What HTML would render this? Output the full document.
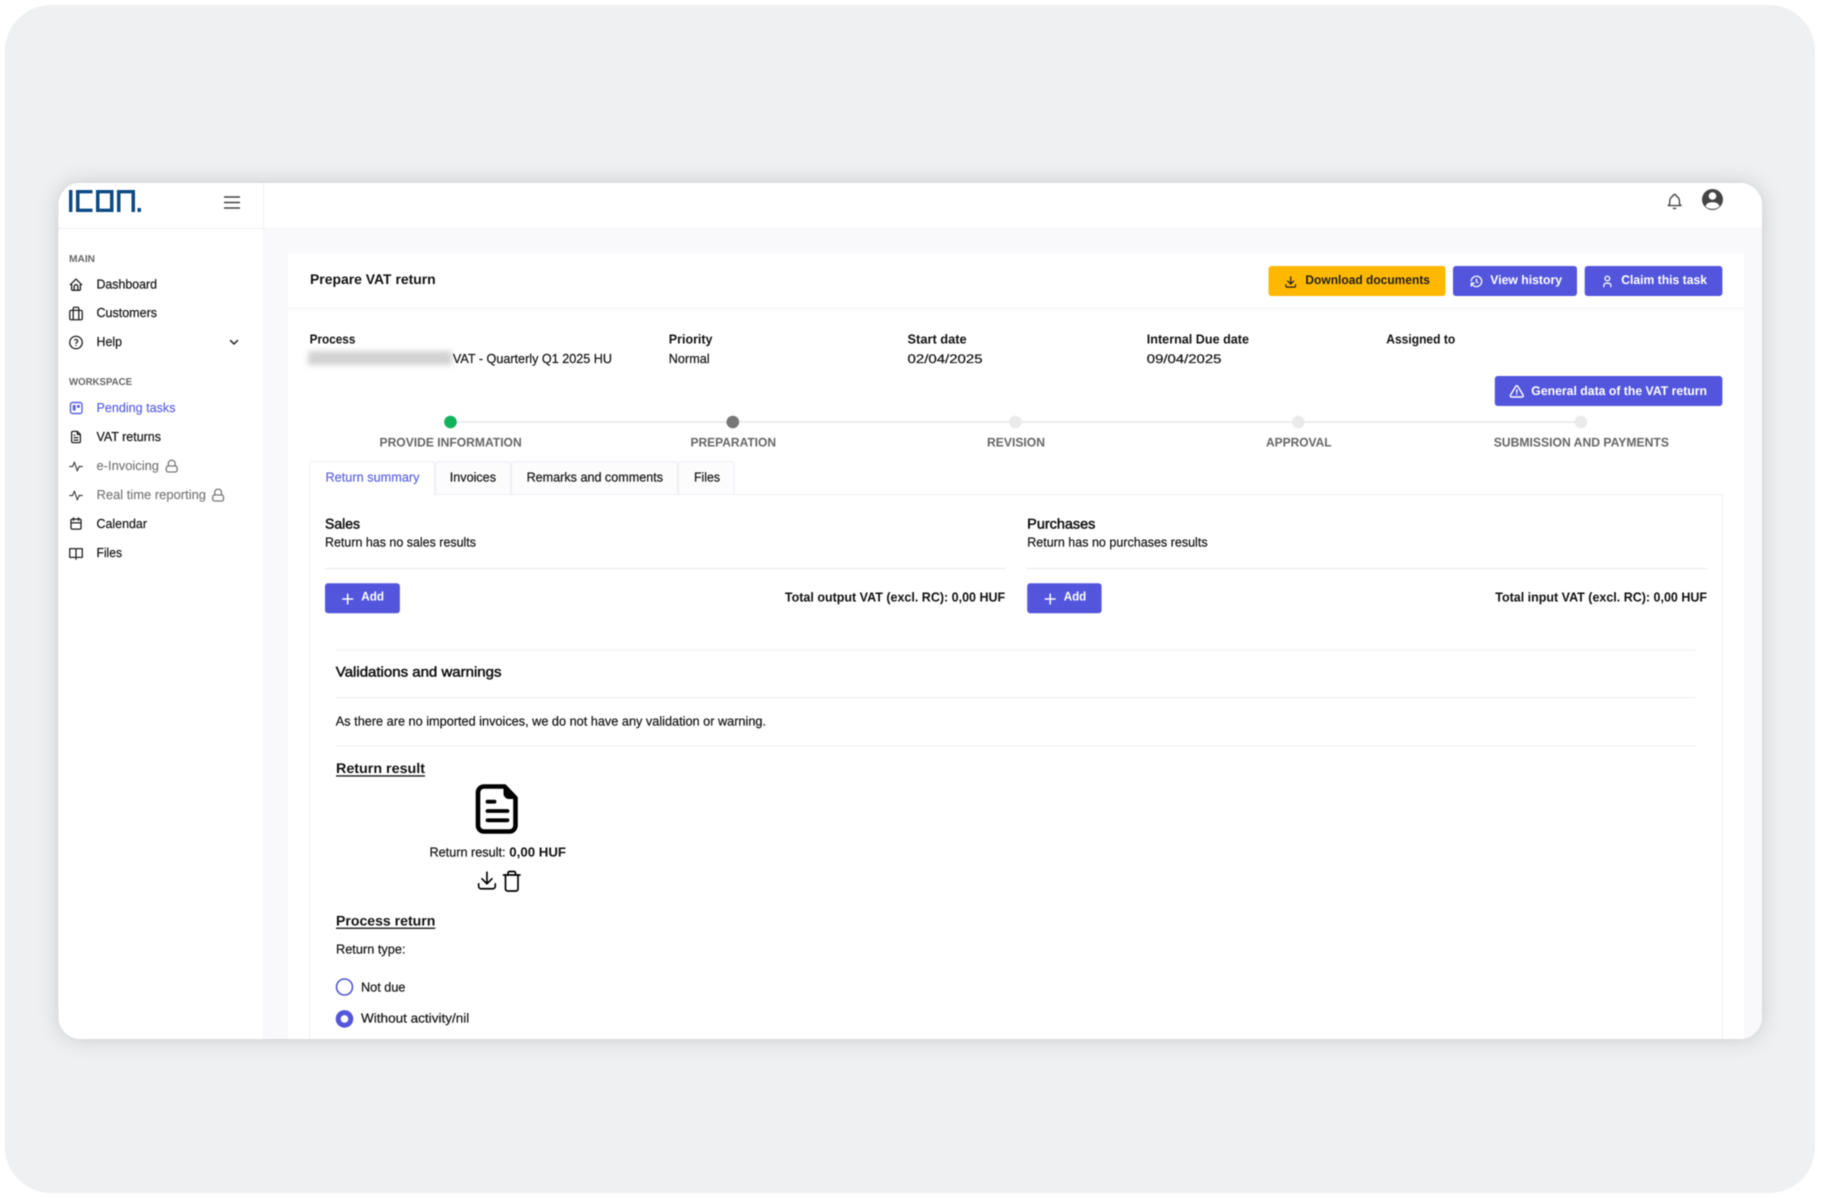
<!DOCTYPE html>
<html lang="en">
<head>
<meta charset="utf-8">
<title>Prepare VAT return</title>
<style>
html,body{margin:0;padding:0;background:#fff;width:1821px;height:1199px;overflow:hidden}
svg{display:block;filter:blur(.4px)}
text{font-family:"Liberation Sans",sans-serif;white-space:pre;text-rendering:geometricPrecision}
.r{font-size:13px;fill:#111;stroke:#111;stroke-width:.18px}
.b{font-size:13px;font-weight:700;fill:#111}
.h{font-size:14px;font-weight:700;fill:#111}
.m{font-size:14px;fill:#111;stroke:#111;stroke-width:.5px}
.s{font-size:10px;font-weight:700;fill:#666}
.n{font-size:13px;fill:#1a1a1a;stroke:#1a1a1a;stroke-width:.25px}
.d{font-size:12.3px;fill:#1a1a1a;stroke:#1a1a1a;stroke-width:.25px}
.g{font-size:13px;fill:#777;stroke:#777;stroke-width:.15px}
.p{font-size:13px;fill:#5b5fe0;stroke:#5b5fe0;stroke-width:.15px}
.st{font-size:12.5px;font-weight:700;fill:#666}
.w{font-size:12.5px;font-weight:700;fill:#fff}
.k{font-size:12.5px;font-weight:700;fill:#222}
.i{fill:none;stroke:#222;stroke-width:2.100;stroke-linecap:round;stroke-linejoin:round}
.a{fill:none;stroke:#444;stroke-width:1.900;stroke-linecap:round;stroke-linejoin:round}
.iw{fill:none;stroke:#fff;stroke-width:2.200;stroke-linecap:round;stroke-linejoin:round}
</style>
</head>
<body>
<svg width="1821" height="1199" viewBox="0 0 1821 1199" xmlns="http://www.w3.org/2000/svg">
<defs>
<filter id="sh" x="-5%" y="-8%" width="110%" height="116%"><feDropShadow dx="0" dy="0" stdDeviation="10" flood-color="#000" flood-opacity=".17"/></filter>
<filter id="bl" x="-10%" y="-60%" width="120%" height="220%"><feGaussianBlur stdDeviation="3"/></filter>
<clipPath id="win"><rect x="58.500" y="183" width="1703.500" height="856" rx="22"/></clipPath>
</defs>

<rect x="5" y="5" width="1810" height="1188" rx="46" fill="#eff0f2"/>
<rect x="58.500" y="183" width="1703.500" height="856" rx="22" fill="#fff" filter="url(#sh)"/>

<g clip-path="url(#win)">
<rect x="58" y="183" width="1704" height="856" fill="#f9f9fb"/>
<rect x="58" y="183" width="1704" height="45" fill="#fff"/>
<rect x="58" y="183" width="205" height="856" fill="#fff"/>
<rect x="263" y="183" width="1" height="45" fill="#f0f0f6"/>
<rect x="263" y="228" width="1" height="811" fill="#f5f5f8"/>
<rect x="58" y="228" width="205" height="1" fill="#eeeef6"/>
<rect x="264" y="228" width="1498" height="1" fill="#f5f5f7"/>

<!-- logo -->
<g fill="#0d4a85">
<title>ICON.</title>
<rect x="69" y="190" width="3.400" height="22"/>
<path d="M76 190h16.500v3.400h-13v15.200h13v3.400h-16.500z"/>
<path d="M96 190h17.500v22h-17.500zM99.500 193.400v15.200h10.500v-15.200z" fill-rule="evenodd"/>
<path d="M117 190h18v22h-3.500v-18.600h-11v18.600h-3.500z"/>
<rect x="137.500" y="208" width="3.500" height="4"/>
</g>
<!-- hamburger -->
<g stroke="#444" stroke-width="1.500"><path d="M224 197h16M224 202.500h16M224 208h16"/></g>

<!-- sidebar -->
<text class="s" x="69" y="262" textLength="26" lengthAdjust="spacingAndGlyphs">MAIN</text>
<text class="n" x="96.500" y="288.700" textLength="60.500" lengthAdjust="spacingAndGlyphs">Dashboard</text>
<text class="n" x="96.500" y="317" textLength="60.500" lengthAdjust="spacingAndGlyphs">Customers</text>
<text class="n" x="96.500" y="346" textLength="25.500" lengthAdjust="spacingAndGlyphs">Help</text>
<text class="s" x="69" y="385" textLength="63" lengthAdjust="spacingAndGlyphs">WORKSPACE</text>
<text class="p" x="96.500" y="412" textLength="79" lengthAdjust="spacingAndGlyphs">Pending tasks</text>
<text class="n" x="96.500" y="441" textLength="64.500" lengthAdjust="spacingAndGlyphs">VAT returns</text>
<text class="g" x="96.500" y="470" textLength="62.500" lengthAdjust="spacingAndGlyphs">e-Invoicing</text>
<text class="g" x="96.500" y="499" textLength="109.500" lengthAdjust="spacingAndGlyphs">Real time reporting</text>
<text class="n" x="96.500" y="528" textLength="50.500" lengthAdjust="spacingAndGlyphs">Calendar</text>
<text class="n" x="96.500" y="557" textLength="25.500" lengthAdjust="spacingAndGlyphs">Files</text>

<g transform="translate(68.500 277.200) scale(.625)"><path class="i" d="M5 12H3l9-9 9 9h-2M5 12v7a2 2 0 0 0 2 2h10a2 2 0 0 0 2-2v-7M9 21v-6a3 3 0 0 1 6 0v6"/></g>
<g transform="translate(68.500 306) scale(.625)"><path class="i" d="M2 9a2 2 0 0 1 2-2h16a2 2 0 0 1 2 2v11a2 2 0 0 1-2 2H4a2 2 0 0 1-2-2zM7.500 22V7M16.500 22V7M7.500 7V4a2 2 0 0 1 2-2h5a2 2 0 0 1 2 2v3"/></g>
<g transform="translate(68.500 335) scale(.625)"><path class="i" d="M12 2a10 10 0 1 0 0 20 10 10 0 0 0 0-20M12 17v.010M12 13.500a1.500 1.500 0 0 1 1-1.500 2.600 2.600 0 1 0-3-4"/></g>
<path d="M230.500 340.500l3.500 3.500 3.500-3.500" fill="none" stroke="#222" stroke-width="1.500" stroke-linecap="round" stroke-linejoin="round"/>

<g fill="none" stroke="#5b5fe0" stroke-width="1.400">
<rect x="70.500" y="402.500" width="11.500" height="11" rx="2"/>
<rect x="72.800" y="405" width="2.800" height="5.500" fill="#5b5fe0" stroke="none"/>
<rect x="77" y="405" width="2.800" height="2.800" fill="#5b5fe0" stroke="none"/>
</g>
<g transform="translate(68.500 429.500) scale(.625)"><path class="i" d="M14 3v4a1 1 0 0 0 1 1h4M17 21H7a2 2 0 0 1-2-2V5a2 2 0 0 1 2-2h7l5 5v11a2 2 0 0 1-2 2zM9 9h1M9 13h6M9 17h6"/></g>
<g transform="translate(68.500 459) scale(.625)"><path class="a" d="M2 12h4.500l3-7 4.500 14 3-7h5"/></g>
<g transform="translate(68.500 488) scale(.625)"><path class="a" d="M2 12h4.500l3-7 4.500 14 3-7h5"/></g>
<g fill="none" stroke="#777" stroke-width="1.300" stroke-linejoin="round">
<rect x="166.300" y="466" width="10.800" height="6" rx="1.800"/><path d="M168.300 466v-2.500a3.400 3.400 0 0 1 6.800 0v2.500"/>
<rect x="212.700" y="495" width="10.800" height="6" rx="1.800"/><path d="M214.700 495v-2.500a3.400 3.400 0 0 1 6.800 0v2.500"/>
</g>
<g transform="translate(68.500 516) scale(.625)"><path class="i" d="M4 7a2 2 0 0 1 2-2h12a2 2 0 0 1 2 2v12a2 2 0 0 1-2 2H6a2 2 0 0 1-2-2zM16 3v4M8 3v4M4 11h16"/></g>
<g transform="translate(68.500 545.500) scale(.625)"><path class="i" d="M2 5h8a2 2 0 0 1 2 2v15M22 5h-8a2 2 0 0 0-2 2M2 5v14h8M22 5v14h-8"/></g>

<!-- top right -->
<g transform="translate(1665 192) scale(.8)"><path fill="none" stroke="#444" stroke-width="1.700" stroke-linecap="round" stroke-linejoin="round" d="M10 5a2 2 0 1 1 4 0 7 7 0 0 1 4 6v3a4 4 0 0 0 2 3H4a4 4 0 0 0 2-3v-3a7 7 0 0 1 4-6M10.500 20.500h3"/></g>
<circle cx="1712.500" cy="199.500" r="10.500" fill="#444"/>
<circle cx="1712.500" cy="196" r="3.800" fill="#fff"/>
<path d="M1705.500 206.200c1-3 3.500-4 7-4s6 1 7 4c-1.600 1.700-4.100 2.700-7 2.700s-5.400-1-7-2.700z" fill="#fff"/>

<!-- card -->
<rect x="288" y="253" width="1456" height="800" rx="3" fill="#fff"/>
<rect x="288" y="308" width="1456" height="1" fill="#f3f3f5"/>
<text class="h" x="310" y="284" textLength="125.700" lengthAdjust="spacingAndGlyphs">Prepare VAT return</text>

<!-- buttons -->
<rect x="1268.500" y="266" width="177" height="30" rx="3" fill="#ffb800"/>
<g transform="translate(1283.500 274.500) scale(.6)"><path class="i" d="M4 17v2a2 2 0 0 0 2 2h12a2 2 0 0 0 2-2v-2M7 11l5 5 5-5M12 4v12"/></g>
<text class="k" x="1305.400" y="284" textLength="124.600" lengthAdjust="spacingAndGlyphs">Download documents</text>

<rect x="1453" y="266" width="124" height="30" rx="3" fill="#5356dc"/>
<g transform="translate(1469.500 274.500) scale(.58)"><path class="iw" d="M12 8v4l2 2M3.050 11a9 9 0 1 1 .5 4m-.5 5v-5h5"/></g>
<text class="w" x="1490.300" y="284" textLength="71.700" lengthAdjust="spacingAndGlyphs">View history</text>

<rect x="1584.700" y="266" width="137.700" height="30" rx="3" fill="#5356dc"/>
<g transform="translate(1600.400 274.500) scale(.58)"><path class="iw" d="M8 7a4 4 0 1 0 8 0 4 4 0 0 0-8 0M6 21v-2a4 4 0 0 1 4-4h4a4 4 0 0 1 4 4v2"/></g>
<text class="w" x="1621.200" y="284" textLength="85.800" lengthAdjust="spacingAndGlyphs">Claim this task</text>

<rect x="1494.800" y="376" width="227.600" height="30" rx="3" fill="#5356dc"/>
<g transform="translate(1509 384) scale(.65)"><path class="iw" d="M12 9v4M10.363 3.591 2.257 17.125a1.914 1.914 0 0 0 1.636 2.871h16.214a1.914 1.914 0 0 0 1.636-2.870L13.637 3.590a1.914 1.914 0 0 0-3.274 0zM12 16h.010"/></g>
<text class="w" x="1531.300" y="395" textLength="175.700" lengthAdjust="spacingAndGlyphs">General data of the VAT return</text>

<!-- meta -->
<text class="b" x="309.600" y="343.500" textLength="45.800" lengthAdjust="spacingAndGlyphs">Process</text>
<rect x="308" y="351" width="144" height="14" fill="#d2d2d2" filter="url(#bl)"/>
<rect x="452" y="345" width="1" height="0" fill="#fff"/>
<text class="n" x="452.900" y="363" textLength="159.100" lengthAdjust="spacingAndGlyphs">VAT - Quarterly Q1 2025 HU</text>
<text class="b" x="668.800" y="343.500" textLength="43.700" lengthAdjust="spacingAndGlyphs">Priority</text>
<text class="n" x="668.800" y="363" textLength="40.800" lengthAdjust="spacingAndGlyphs">Normal</text>
<text class="b" x="907.500" y="343.500" textLength="59.200" lengthAdjust="spacingAndGlyphs">Start date</text>
<text class="d" x="907.500" y="363" textLength="75.100" lengthAdjust="spacingAndGlyphs">02/04/2025</text>
<text class="b" x="1146.800" y="343.500" textLength="102.200" lengthAdjust="spacingAndGlyphs">Internal Due date</text>
<text class="d" x="1146.800" y="363" textLength="74.600" lengthAdjust="spacingAndGlyphs">09/04/2025</text>
<text class="b" x="1386.300" y="343.500" textLength="68.900" lengthAdjust="spacingAndGlyphs">Assigned to</text>

<!-- stepper -->
<rect x="450" y="421" width="1131" height="2" fill="#ececee"/>
<circle cx="450.500" cy="422" r="6.300" fill="#11b35b"/>
<circle cx="732.800" cy="422" r="6.300" fill="#777"/>
<circle cx="1015.300" cy="422" r="6.300" fill="#eaeaea"/>
<circle cx="1298.300" cy="422" r="6.300" fill="#eaeaea"/>
<circle cx="1581" cy="422" r="6.300" fill="#eaeaea"/>
<text class="st" x="379.500" y="446.500" textLength="142.200" lengthAdjust="spacingAndGlyphs">PROVIDE INFORMATION</text>
<text class="st" x="690.500" y="446.500" textLength="85.500" lengthAdjust="spacingAndGlyphs">PREPARATION</text>
<text class="st" x="987" y="446.500" textLength="58" lengthAdjust="spacingAndGlyphs">REVISION</text>
<text class="st" x="1266" y="446.500" textLength="65.500" lengthAdjust="spacingAndGlyphs">APPROVAL</text>
<text class="st" x="1493.700" y="446.500" textLength="175.300" lengthAdjust="spacingAndGlyphs">SUBMISSION AND PAYMENTS</text>

<!-- content box and tabs -->
<rect x="309.500" y="494.500" width="1413" height="600" fill="#fff" stroke="#eeeef6"/>
<path d="M435.500 494.500v-30a3 3 0 0 1 3-3h69a3 3 0 0 1 3 3v30z" fill="#fcfcfd" stroke="#eeeef6"/>
<path d="M511.500 494.500v-30a3 3 0 0 1 3-3h160a3 3 0 0 1 3 3v30z" fill="#fcfcfd" stroke="#eeeef6"/>
<path d="M678.500 494.500v-30a3 3 0 0 1 3-3h50a3 3 0 0 1 3 3v30z" fill="#fcfcfd" stroke="#eeeef6"/>
<path d="M309.500 496v-31.500a3 3 0 0 1 3-3h119a3 3 0 0 1 3 3V496z" fill="#fff"/>
<path d="M309.500 496v-31.500a3 3 0 0 1 3-3h119a3 3 0 0 1 3 3V496" fill="none" stroke="#eeeef6"/>
<text class="p" x="325.500" y="481.700" textLength="94" lengthAdjust="spacingAndGlyphs">Return summary</text>
<text class="n" x="449.800" y="481.700" textLength="46.200" lengthAdjust="spacingAndGlyphs">Invoices</text>
<text class="n" x="526.600" y="481.700" textLength="136.400" lengthAdjust="spacingAndGlyphs">Remarks and comments</text>
<text class="n" x="694" y="481.700" textLength="26" lengthAdjust="spacingAndGlyphs">Files</text>

<!-- sales / purchases -->
<text class="m" x="325" y="528.300" textLength="35" lengthAdjust="spacingAndGlyphs">Sales</text>
<text class="n" x="325" y="546.700" textLength="151" lengthAdjust="spacingAndGlyphs">Return has no sales results</text>
<rect x="325" y="568" width="680" height="1" fill="#e9e9ec"/>
<rect x="325" y="583.300" width="74.900" height="30" rx="3" fill="#5356dc"/>
<path d="M342.800 599h9.800M347.700 594.100v9.800" stroke="#fff" stroke-width="1.500" stroke-linecap="round"/>
<text class="w" x="361.300" y="600.700" textLength="22.700" lengthAdjust="spacingAndGlyphs">Add</text>
<text class="b" x="784.900" y="601.500" textLength="220.300" lengthAdjust="spacingAndGlyphs">Total output VAT (excl. RC): 0,00 HUF</text>

<text class="m" x="1027.200" y="528.300" textLength="68.200" lengthAdjust="spacingAndGlyphs">Purchases</text>
<text class="n" x="1027.200" y="546.700" textLength="180.400" lengthAdjust="spacingAndGlyphs">Return has no purchases results</text>
<rect x="1027" y="568" width="680.300" height="1" fill="#e9e9ec"/>
<rect x="1027.200" y="583.300" width="74.400" height="30" rx="3" fill="#5356dc"/>
<path d="M1045.300 599h9.800M1050.200 594.100v9.800" stroke="#fff" stroke-width="1.500" stroke-linecap="round"/>
<text class="w" x="1063.700" y="600.700" textLength="22.600" lengthAdjust="spacingAndGlyphs">Add</text>
<text class="b" x="1495.300" y="601.500" textLength="211.700" lengthAdjust="spacingAndGlyphs">Total input VAT (excl. RC): 0,00 HUF</text>

<!-- validations -->
<rect x="335.800" y="649.500" width="1360" height="1" fill="#f0f0f2"/>
<text class="m" x="335.800" y="676.700" textLength="165.700" lengthAdjust="spacingAndGlyphs">Validations and warnings</text>
<rect x="335.800" y="697" width="1360" height="1" fill="#ececee"/>
<text class="n" x="335.800" y="725.300" textLength="430.200" lengthAdjust="spacingAndGlyphs">As there are no imported invoices, we do not have any validation or warning.</text>
<rect x="335.800" y="745.500" width="1360" height="1" fill="#ececee"/>

<!-- return result -->
<text class="h" x="336" y="773.200" textLength="89" lengthAdjust="spacingAndGlyphs">Return result</text>
<rect x="336" y="775.300" width="89" height="1.300" fill="#111"/>
<path d="M484 786.500h20.500l11 11.500v27.500a6 6 0 0 1-6 6h-25.500a6 6 0 0 1-6-6v-33a6 6 0 0 1 6-6z" fill="none" stroke="#000" stroke-width="4.600" stroke-linejoin="round"/>
<path d="M504.500 786.500v7a4.500 4.500 0 0 0 4.500 4.500h6.500z" fill="#000" stroke="#000" stroke-width="2" stroke-linejoin="round"/>
<path d="M487.500 801.700h7M487.500 811h20M487.500 820.300h20" stroke="#000" stroke-width="3.800" stroke-linecap="round"/>
<text class="n" x="429.500" y="856.300" textLength="76" lengthAdjust="spacingAndGlyphs">Return result:</text>
<text class="b" x="509.300" y="856.300" textLength="56.700" lengthAdjust="spacingAndGlyphs">0,00 HUF</text>
<g transform="translate(477 870.500) scale(.83)"><path fill="none" stroke="#000" stroke-width="2" stroke-linecap="round" stroke-linejoin="round" d="M2 16v3a3 3 0 0 0 3 3h14a3 3 0 0 0 3-3v-3M6 10l6 6 6-6M12 2v14"/></g>
<path d="M503.500 875h16.500M505.500 875v14a2 2 0 0 0 2 2h8.500a2 2 0 0 0 2-2V875M508 875v-2a1.500 1.500 0 0 1 1.500-1.500h4.500a1.500 1.500 0 0 1 1.500 1.500v2" fill="none" stroke="#000" stroke-width="1.700" stroke-linecap="round" stroke-linejoin="round"/>

<!-- process return -->
<text class="h" x="336" y="925.300" textLength="99.300" lengthAdjust="spacingAndGlyphs">Process return</text>
<rect x="336" y="927.600" width="99.300" height="1.300" fill="#111"/>
<text class="n" x="336" y="953.700" textLength="69.500" lengthAdjust="spacingAndGlyphs">Return type:</text>
<circle cx="344.500" cy="987" r="8" fill="#fff" stroke="#5356dc" stroke-width="1.600"/>
<text class="n" x="361" y="991.300" textLength="44.500" lengthAdjust="spacingAndGlyphs">Not due</text>
<circle cx="344.500" cy="1018.900" r="8.800" fill="#5356dc"/>
<circle cx="344.500" cy="1018.900" r="3.800" fill="#fff"/>
<text class="n" x="361" y="1022.600" textLength="108.300" lengthAdjust="spacingAndGlyphs">Without activity/nil</text>
</g>
</svg>
</body>
</html>
